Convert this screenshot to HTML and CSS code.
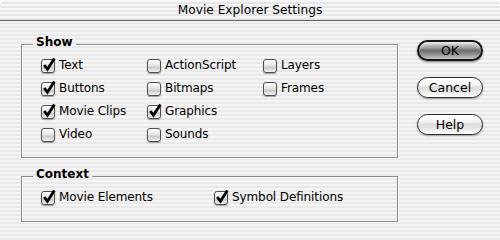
FILE: index.html
```html
<!DOCTYPE html>
<html>
<head>
<meta charset="utf-8">
<link rel="stylesheet" href="styles.css">
</head>
<body>
<div class="window">
  <div class="titlebar">Movie Explorer Settings</div>
  <div class="content">
    <div class="groups">
      <fieldset class="group show">
        <legend>Show</legend>
        <div class="grid">
          <label class="opt"><span class="cb on"><svg viewBox="0 0 14 14"><path d="M3 6.5 L6 10.5 L12.5 0.5"/></svg></span>Text</label>
          <label class="opt"><span class="cb"></span>ActionScript</label>
          <label class="opt"><span class="cb"></span>Layers</label>
          <label class="opt"><span class="cb on"><svg viewBox="0 0 14 14"><path d="M3 6.5 L6 10.5 L12.5 0.5"/></svg></span>Buttons</label>
          <label class="opt"><span class="cb"></span>Bitmaps</label>
          <label class="opt"><span class="cb"></span>Frames</label>
          <label class="opt"><span class="cb on"><svg viewBox="0 0 14 14"><path d="M3 6.5 L6 10.5 L12.5 0.5"/></svg></span>Movie Clips</label>
          <label class="opt"><span class="cb on"><svg viewBox="0 0 14 14"><path d="M3 6.5 L6 10.5 L12.5 0.5"/></svg></span>Graphics</label>
          <span></span>
          <label class="opt"><span class="cb"></span>Video</label>
          <label class="opt"><span class="cb"></span>Sounds</label>
          <span></span>
        </div>
      </fieldset>
      <fieldset class="group context">
        <legend>Context</legend>
        <div class="row">
          <label class="opt wide"><span class="cb on"><svg viewBox="0 0 14 14"><path d="M3 6.5 L6 10.5 L12.5 0.5"/></svg></span>Movie Elements</label>
          <label class="opt"><span class="cb on"><svg viewBox="0 0 14 14"><path d="M3 6.5 L6 10.5 L12.5 0.5"/></svg></span>Symbol Definitions</label>
        </div>
      </fieldset>
    </div>
    <div class="buttons">
      <div class="btn default">OK</div>
      <div class="btn">Cancel</div>
      <div class="btn">Help</div>
    </div>
  </div>
</div>
</body>
</html>
```
FILE: styles.css
```css
html, body {
  margin: 0;
  padding: 0;
  width: 500px;
  height: 240px;
  overflow: hidden;
  font-family: "DejaVu Sans", "Liberation Sans", sans-serif;
  font-size: 12px;
  color: #000;
}
.window {
  width: 500px;
  height: 240px;
  background: repeating-linear-gradient(to bottom, #f5f5f5 0px, #f5f5f5 2px, #e9e9e9 2px, #e9e9e9 4px);
  border-radius: 6px 6px 0 0;
}
.titlebar {
  height: 20px;
  line-height: 21px;
  text-align: center;
  font-size: 12.2px;
  border-bottom: 1px solid #5c5c5c;
  box-shadow: 0 1px 0 #fafafa;
  background: repeating-linear-gradient(to bottom, #f7f7f7 0px, #f7f7f7 2px, #e6e6e6 2px, #e6e6e6 4px);
  border-radius: 6px 6px 0 0;
}
.content {
  display: flex;
  padding: 15px 0 0 21px;
  gap: 19px;
}
.groups {
  width: 377px;
  display: flex;
  flex-direction: column;
  gap: 10px;
}
.group {
  margin: 0;
  padding: 0 0 0 19px;
  border: 1px solid #8a8a8a;
  box-shadow: 1px 1px 0 #ffffff, inset 1px 1px 0 #ffffff;
  min-width: 0;
}
.group legend {
  font-weight: bold;
  font-size: 12px;
  line-height: 13px;
  padding: 0 3px 4px 3px;
  margin-left: -8px;
}
.show .grid {
  display: grid;
  grid-template-columns: 106px 116px auto;
  grid-auto-rows: 14px;
  row-gap: 9px;
  padding: 5px 0 16px 0;
}
.context .row {
  display: flex;
  padding: 5px 0 17px 0;
}
.opt {
  display: flex;
  align-items: center;
  gap: 4px;
  height: 14px;
  line-height: 14px;
  white-space: nowrap;
  letter-spacing: -0.1px;
}
.opt.wide {
  width: 173px;
}
.cb {
  position: relative;
  flex: none;
  width: 12px;
  height: 12px;
  border: 1px solid #4e4e4e;
  border-radius: 3px;
  background: linear-gradient(to bottom, #ffffff 0%, #e2e2e2 50%, #c9c9c9 60%, #f2f2f2 100%);
  box-shadow: 0 1px 1px rgba(0,0,0,0.35), inset 0 1px 1px rgba(255,255,255,0.9);
  margin-bottom: -1px;
}
.cb svg {
  position: absolute;
  left: -1px;
  top: -2px;
  width: 15px;
  height: 15px;
  overflow: visible;
}
.cb svg path {
  fill: none;
  stroke: #000;
  stroke-width: 2.6;
  stroke-linejoin: miter;
  stroke-linecap: butt;
}
.buttons {
  display: flex;
  flex-direction: column;
  gap: 16px;
  padding-top: 4px;
}
.btn {
  width: 64px;
  height: 19px;
  line-height: 19px;
  text-align: center;
  border: 1px solid #2a2a2a;
  border-radius: 11px;
  background: linear-gradient(to bottom, #ffffff 0%, #f4f4f4 35%, #dcdcdc 50%, #e6e6e6 70%, #ffffff 100%);
  box-shadow: 0 1px 2px rgba(0,0,0,0.35);
  font-size: 12.5px;
}
.btn.default {
  border: 2px solid #151515;
  width: 62px;
  height: 17px;
  line-height: 17px;
  background: linear-gradient(to bottom, #d8d8d8 0%, #a8a8a8 30%, #6e6e6e 50%, #8a8a8a 70%, #c8c8c8 100%);
  box-shadow: 0 1px 2px rgba(0,0,0,0.5), inset 0 2px 2px rgba(255,255,255,0.5);
}
```
